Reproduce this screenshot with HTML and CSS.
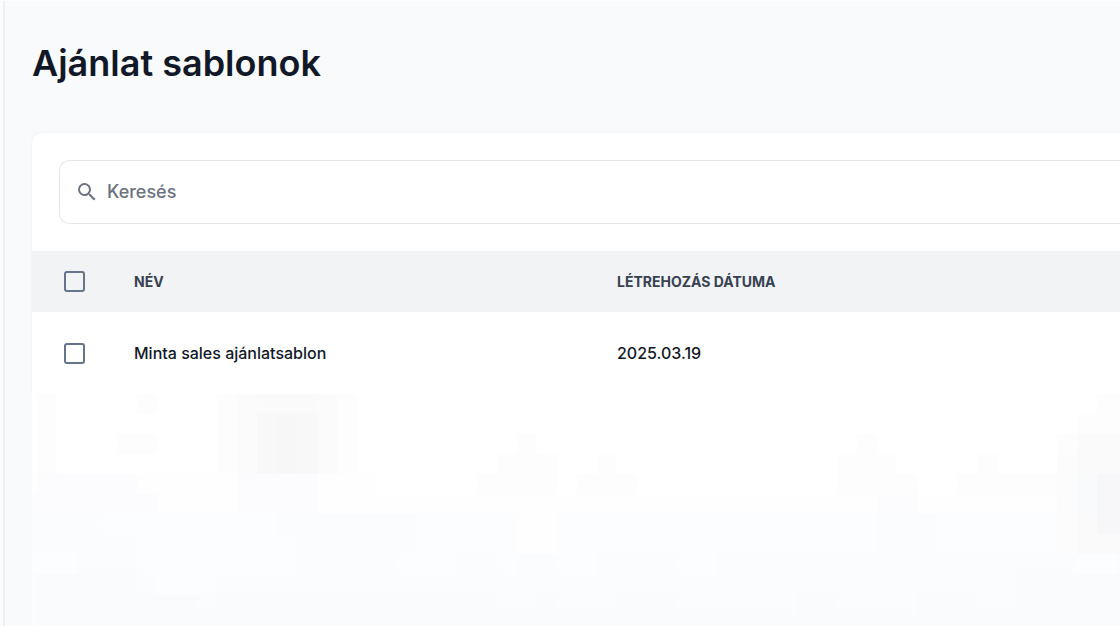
FILE: index.html
```html
<!DOCTYPE html>
<html lang="hu">
<head>
    <meta charset="UTF-8">
    <meta name="viewport" content="width=device-width, initial-scale=1.0">
    <title>Ajánlat sablonok</title>
    <link rel="stylesheet" href="styles.css">
</head>
<body>
    <div class="layout">
        <div class="sidebar-edge"></div>
        <main class="content">
            <h1 class="page-title">Ajánlat sablonok</h1>

            <section class="card">
                <div class="card-toolbar">
                    <label class="search">
                        <svg class="search-icon" viewBox="0 0 24 24" aria-hidden="true">
                            <path d="M15.5 14h-.79l-.28-.27A6.471 6.471 0 0 0 16 9.5 6.5 6.5 0 1 0 9.5 16c1.61 0 3.09-.59 4.23-1.57l.27.28v.79l5 4.99L20.49 19l-4.99-5zm-6 0C7.01 14 5 11.99 5 9.5S7.01 5 9.5 5 14 7.01 14 9.5 11.99 14 9.5 14z"/>
                        </svg>
                        <input class="search-input" type="text" placeholder="Keresés" aria-label="Keresés">
                    </label>
                </div>

                <table class="table">
                    <thead>
                        <tr>
                            <th class="col-check"><input class="checkbox" type="checkbox" aria-label="Összes kijelölése"></th>
                            <th class="col-name">Név</th>
                            <th>Létrehozás dátuma</th>
                        </tr>
                    </thead>
                    <tbody>
                        <tr>
                            <td class="col-check"><input class="checkbox" type="checkbox" aria-label="Minta sales ajánlatsablon"></td>
                            <td class="col-name">Minta sales ajánlatsablon</td>
                            <td>2025.03.19</td>
                        </tr>
                    </tbody>
                </table>
            </section>

            <!-- obscured rows, 20px blocks -->
            <svg class="mosaic" aria-hidden="true" shape-rendering="crispEdges">
                <g fill="#fdfdfd">
                    <path d="M5 0h20v80H5zM105 0h20v20h-20zM85 40h40v20H85zM185 0h140v80H185zM445 80h20V60h20V40h20v20h20v40h-80z"/>
                    <path d="M545 80h20V60h20v20h20v20h-60zM805 60h20V40h20v20h20v20h20v20h-80zM925 80h20V60h20v20h60v20H925z"/>
                    <path d="M1025 40h20V20h20V0h23v100h-63z"/>
                </g>
                <path fill="#fefefe" d="M0 80h345v20h743v20H0z"/>
                <path fill="#fbfbfc" d="M205 0h100v80H205zM1045 40h43v100h-43z"/>
                <path fill="#fcfcfe" d="M5 80h100v20h20v20H0v-20h5zM205 80h80v40h-80zM845 100h40v20h-40z"/>
                <path fill="#fafafa" d="M225 0h60v80h-60z"/>
                <path fill="#f8f8f8" d="M225 20h60v60h-60z"/>
                <path fill="#f7f7f7" d="M245 20h20v60h-20z"/>
                <path fill="#fcfdfe" d="M0 120h1088v112H0z"/>
                <path fill="#fefefe" d="M485 120h40v40h-40z"/>
                <path fill="#fbfcfe" d="M0 120h65v20h40v20H0zM245 120h140v40H265v-20h-20zM845 120h60v40h-60z"/>
                <path fill="#fbfcfd" d="M45 160h60v20h60v20h20v-20h80v-20h100v20h60v-20h40v20h20v-20h40v20h40v-20h80v20h40v-20h360v20h40v-20h63v72H0v-52h45z"/>
                <path fill="#fafbfc" d="M5 180h100v20h60v20h-60v-20h60v20h20v-20h280v20h40v-20h20v20h60v-20h60v20h120v-20h40v20h80v-20h60v20h40v-40h103v52H5z"/>
                <path fill="#fcfdfe" d="M125 180h40v20h-40z"/>
                <path fill="#fcfcfd" d="M1025 60h20v100h-20z"/>
                <path fill="#fafafb" d="M1045 40h43v40h-43zM1045 120h43v40h-43z"/>
                <path fill="#f9fafc" d="M1045 80h20v40h-20z"/>
                <path fill="#f7f7f9" d="M1065 80h23v60h-23z"/>
            </svg>
        </main>
    </div>
</body>
</html>
```
FILE: styles.css
```css
:root {
    --page-bg: #f9fafc;
    --card-bg: #ffffff;
    --border: #e5e7eb;
    --head-bg: #f2f3f5;
    --title: #111827;
    --muted: #6b7280;
    --control: #64748b;
}

* {
    margin: 0;
    padding: 0;
    box-sizing: border-box;
}

body {
    font-family: Inter, "Liberation Sans", sans-serif;
    background-color: var(--page-bg);
    color: var(--title);
    overflow: hidden;
}

.layout {
    display: flex;
    min-height: 100vh;
    border-top: 1px solid #fdfdfd;
}

.sidebar-edge {
    flex: none;
    width: 5px;
    background-color: #fcfcfd;
    border-right: 2px solid #eeeff1;
}

.content {
    flex: 1;
    min-width: 0;
    padding: 38px 0 0 27px;
}

.page-title {
    font-size: 36px;
    line-height: 48px;
    font-weight: 600;
    margin-bottom: 46px;
}

.card {
    background-color: var(--card-bg);
    border-top-left-radius: 10px;
    box-shadow: 0 0 3px rgba(17, 24, 39, 0.06);
}

.card-toolbar {
    padding: 27px 0 27px 27px;
}

.search {
    display: flex;
    align-items: center;
    gap: 8px;
    height: 64px;
    padding-left: 15px;
    border: 1px solid var(--border);
    border-right: none;
    border-radius: 10px 0 0 10px;
}

.search-icon {
    flex: none;
    width: 24px;
    height: 24px;
    fill: var(--muted);
}

.search-input {
    flex: 1;
    min-width: 0;
    border: none;
    outline: none;
    background: transparent;
    font-family: inherit;
    font-size: 18px;
    line-height: 24px;
    font-weight: 500;
    color: var(--title);
}

.search-input::placeholder {
    color: var(--muted);
    opacity: 1;
}

.table {
    width: 100%;
    table-layout: fixed;
    border-collapse: collapse;
    text-align: left;
}

.table th {
    height: 61px;
    background-color: var(--head-bg);
    font-size: 14px;
    line-height: 20px;
    font-weight: 700;
    color: #374151;
    text-transform: uppercase;
}

.table td {
    height: 82px;
    font-size: 16px;
    line-height: 24px;
    font-weight: 500;
}

.table .col-check {
    width: 102px;
    padding-left: 32px;
}

.table .col-name {
    width: 483px;
}

.checkbox {
    display: block;
    appearance: none;
    width: 21px;
    height: 21px;
    border: 2px solid var(--control);
    border-radius: 3px;
}

.checkbox:checked {
    background-color: var(--control);
}

.mosaic {
    display: block;
    width: 100%;
    height: 232px;
    background-color: var(--card-bg);
}
```
